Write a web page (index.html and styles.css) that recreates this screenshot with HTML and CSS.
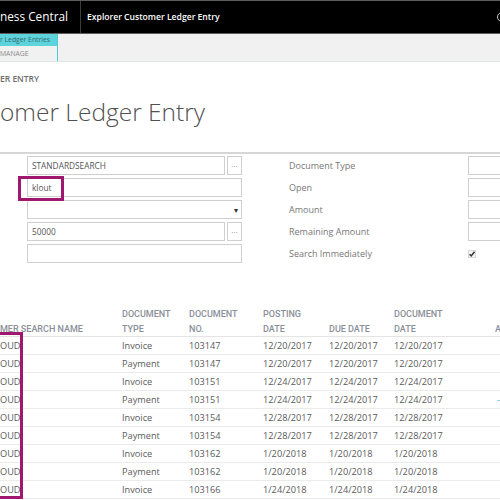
FILE: index.html
```html
<!DOCTYPE html>
<html lang="en">
<head>
    <meta charset="utf-8">
    <title>Explorer Customer Ledger Entry</title>
    <link rel="stylesheet" href="styles.css">
</head>
<body>

<!-- App Bar -->
<header class="appbar">
    <div class="brand">ness Central</div>
    <div class="page-title">Explorer Customer Ledger Entry</div>
    <span class="search-icon"></span>
</header>

<!-- Tabs -->
<nav class="tabstrip">
    <div class="tabs">
        <div class="tab active">r Ledger Entries</div>
        <div class="tab">MANAGE</div>
    </div>
</nav>

<main class="content">
    <div class="breadcrumb">ER ENTRY</div>
    <h1 class="title">omer Ledger Entry</h1>

    <!-- Filters -->
    <section class="filters">
        <div class="col-left">
            <div class="field">
                <div class="box">STANDARDSEARCH</div>
                <div class="lookup">...</div>
            </div>
            <div class="field">
                <div class="box">klout</div>
            </div>
            <div class="field">
                <div class="box"><span class="caret">&#9662;</span></div>
            </div>
            <div class="field">
                <div class="box">50000</div>
                <div class="lookup">...</div>
            </div>
            <div class="field">
                <div class="box"></div>
            </div>
        </div>

        <div class="col-right">
            <div class="filter-row">
                <span class="filter-label">Document Type</span>
                <span class="filter-input"></span>
            </div>
            <div class="filter-row">
                <span class="filter-label">Open</span>
                <span class="filter-input"></span>
            </div>
            <div class="filter-row">
                <span class="filter-label">Amount</span>
                <span class="filter-input"></span>
            </div>
            <div class="filter-row">
                <span class="filter-label">Remaining Amount</span>
                <span class="filter-input"></span>
            </div>
            <div class="filter-row">
                <span class="filter-label">Search Immediately</span>
                <svg class="check" width="8" height="8" viewBox="0 0 8 8">
                    <rect x="0.5" y="0.5" width="7" height="7" fill="#f4f4f4" stroke="#d8d8d8"/>
                    <path d="M1.6 4.2 L3.2 5.9 L6.5 1.8" fill="none" stroke="#333" stroke-width="1.5"/>
                </svg>
            </div>
        </div>
    </section>

    <!-- Ledger Entries -->
    <table class="ledger">
        <colgroup>
            <col style="width:122px">
            <col style="width:67px">
            <col style="width:74px">
            <col style="width:66px">
            <col style="width:65px">
            <col style="width:101px">
            <col style="width:20px">
        </colgroup>
        <thead>
            <tr>
                <th>mer Search Name</th>
                <th>Document<br>Type</th>
                <th>Document<br>No.</th>
                <th>Posting<br>Date</th>
                <th>Due Date</th>
                <th>Document<br>Date</th>
                <th>A</th>
            </tr>
        </thead>
        <tbody>
            <tr><td>OUD</td><td>Invoice</td><td>103147</td><td>12/20/2017</td><td>12/20/2017</td><td>12/20/2017</td><td></td></tr>
            <tr><td>OUD</td><td>Payment</td><td>103147</td><td>12/20/2017</td><td>12/20/2017</td><td>12/20/2017</td><td></td></tr>
            <tr><td>OUD</td><td>Invoice</td><td>103151</td><td>12/24/2017</td><td>12/24/2017</td><td>12/24/2017</td><td></td></tr>
            <tr><td>OUD</td><td>Payment</td><td>103151</td><td>12/24/2017</td><td>12/24/2017</td><td>12/24/2017</td><td class="neg">-</td></tr>
            <tr><td>OUD</td><td>Invoice</td><td>103154</td><td>12/28/2017</td><td>12/28/2017</td><td>12/28/2017</td><td></td></tr>
            <tr><td>OUD</td><td>Payment</td><td>103154</td><td>12/28/2017</td><td>12/28/2017</td><td>12/28/2017</td><td></td></tr>
            <tr><td>OUD</td><td>Invoice</td><td>103162</td><td>1/20/2018</td><td>1/20/2018</td><td>1/20/2018</td><td></td></tr>
            <tr><td>OUD</td><td>Payment</td><td>103162</td><td>1/20/2018</td><td>1/20/2018</td><td>1/20/2018</td><td></td></tr>
            <tr><td>OUD</td><td>Invoice</td><td>103166</td><td>1/24/2018</td><td>1/24/2018</td><td>1/24/2018</td><td></td></tr>
        </tbody>
    </table>
</main>

<!-- Annotation boxes -->
<div class="highlight hl-search"></div>
<div class="highlight hl-names"></div>

</body>
</html>
```

FILE: styles.css
```css
/* General Layout */
* {
    box-sizing: border-box;
}

body {
    margin: 0;
    width: 500px;
    height: 500px;
    overflow: hidden;
    position: relative;
    background: #ffffff;
    color: #505050;
    font-family: 'Open Sans', sans-serif;
}

/* App Bar */
.appbar {
    display: flex;
    align-items: center;
    height: 34px;
    background: #000000;
    border-top: 1px solid #5c5c5c;
    border-bottom: 1px solid #5c5c5c;
    color: white;
}

.brand {
    flex-shrink: 0;
    width: 81px;
    height: 100%;
    border-right: 1px solid #3c3c3c;
    font-size: 11.8px;
    line-height: 31px;
    white-space: nowrap;
}

.page-title {
    padding-left: 6px;
    font-size: 8.6px;
    font-weight: 600;
    white-space: nowrap;
}

.search-icon {
    margin-left: auto;
    margin-right: -7px;
    width: 10px;
    height: 10px;
    border: 1.5px solid #cccccc;
    border-radius: 50%;
}

/* Tabs */
.tabstrip {
    height: 28px;
    background: #f1f1f1;
    border-bottom: 1px solid #e0e5e5;
}

.tabs {
    width: 58px;
    height: 100%;
    border-right: 1px solid #4ccbd4;
}

.tab {
    height: 12px;
    font-size: 6.8px;
    line-height: 12px;
    color: #8a8a8a;
    white-space: nowrap;
    overflow: hidden;
}

.tab.active {
    background: #5dd3dc;
    color: #336a70;
}

.tab + .tab {
    height: 15px;
    line-height: 15px;
}

/* Page Header */
.breadcrumb {
    margin-top: 11px;
    font-size: 8.5px;
    font-weight: 600;
    line-height: 12px;
    color: #6e6e6e;
}

.title {
    margin: 9px 0 0;
    font-size: 24.5px;
    font-weight: 300;
    line-height: 36px;
    color: #505050;
    white-space: nowrap;
}

/* Filters */
.filters {
    display: flex;
    margin-top: 22px;
    padding: 2px 0 0 27px;
    border-top: 2px solid #d6d6d6;
}

.col-left {
    flex-shrink: 0;
    display: flex;
    flex-direction: column;
    gap: 3px;
    width: 215px;
    margin-right: 47px;
}

.field {
    display: flex;
    height: 19px;
}

.box {
    flex: 1;
    display: flex;
    align-items: center;
    padding-left: 4px;
    border: 1px solid #cfcfcf;
    font-size: 8.3px;
    color: #555555;
}

.caret {
    margin-left: auto;
    margin-right: 3px;
    font-size: 8px;
    color: #333333;
}

.lookup {
    width: 15px;
    margin-left: 2px;
    border: 1px solid #cfcfcf;
    font-size: 8px;
    line-height: 14px;
    text-align: center;
    color: #999999;
}

.col-right {
    flex-shrink: 0;
    display: flex;
    flex-direction: column;
    gap: 3px;
}

.filter-row {
    display: flex;
    align-items: center;
    height: 19px;
}

.filter-label {
    flex-shrink: 0;
    width: 179px;
    font-size: 9px;
    color: #777777;
    white-space: nowrap;
}

.filter-input {
    flex-shrink: 0;
    width: 40px;
    height: 19px;
    border: 1px solid #cfcfcf;
}

/* Ledger Table */
.ledger {
    margin-top: 44px;
    width: 515px;
    border-collapse: collapse;
    table-layout: fixed;
    font-size: 9.2px;
}

.ledger th {
    padding: 0;
    vertical-align: bottom;
    text-align: left;
    font-family: Roboto, sans-serif;
    font-weight: 500;
    font-size: 9px;
    line-height: 14.5px;
    text-transform: uppercase;
    color: #8a9099;
    border-bottom: 1px solid #e4e4e4;
    white-space: nowrap;
    overflow: hidden;
}

.ledger td {
    height: 18px;
    padding: 0;
    color: #5a5a5a;
    border-bottom: 1px solid #ebebeb;
    white-space: nowrap;
}

.ledger td.neg {
    padding-left: 2px;
    color: #3fb1bd;
}

/* Annotation boxes */
.highlight {
    position: absolute;
    border: 3px solid #a0176f;
}

.hl-search {
    left: 18px;
    top: 176px;
    width: 46px;
    height: 25px;
}

.hl-names {
    left: -4px;
    top: 332px;
    width: 27px;
    height: 167px;
}
```
